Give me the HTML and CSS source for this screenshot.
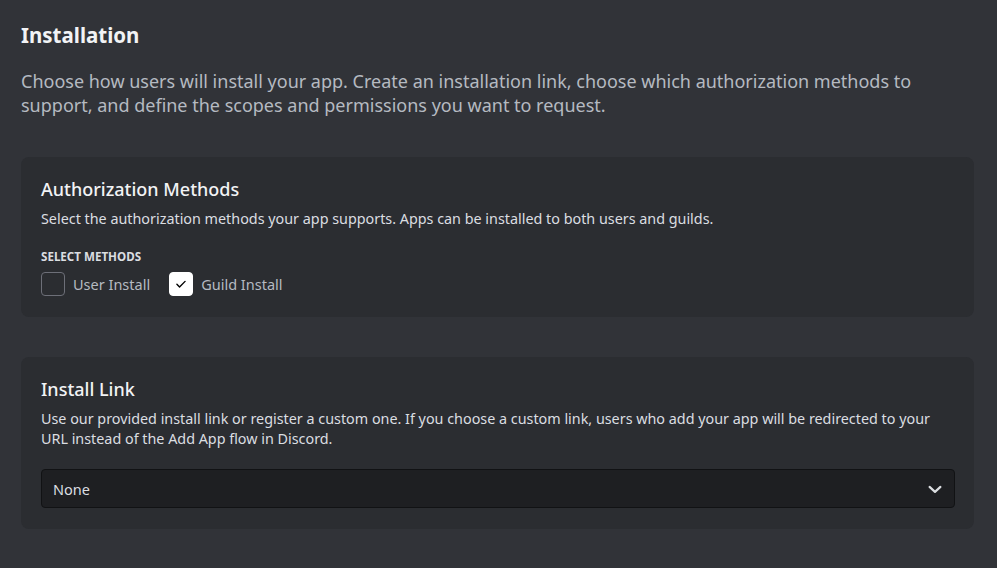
FILE: index.html
```html
<!DOCTYPE html>
<html>
<head>
<meta charset="utf-8">
<link rel="stylesheet" href="styles.css">
</head>
<body>
<main class="page">
  <h1 class="title">Installation</h1>
  <p class="lead">Choose how users will install your app. Create an installation link, choose which authorization methods to support, and define the scopes and permissions you want to request.</p>

  <section class="card">
    <h2 class="card-title">Authorization Methods</h2>
    <p class="card-desc">Select the authorization methods your app supports. Apps can be installed to both users and guilds.</p>
    <div class="label">SELECT METHODS</div>
    <div class="methods">
      <label class="check"><span class="box"></span><span class="check-text">User Install</span></label>
      <label class="check"><span class="box on"><svg width="14" height="14" viewBox="0 0 24 24"><path d="M5 12.5l4.5 4.5L19 7.5" fill="none" stroke="#000" stroke-width="2.4" stroke-linecap="round" stroke-linejoin="round"/></svg></span><span class="check-text">Guild Install</span></label>
    </div>
  </section>

  <section class="card">
    <h2 class="card-title">Install Link</h2>
    <p class="card-desc">Use our provided install link or register a custom one. If you choose a custom link, users who add your app will be redirected to your URL instead of the Add App flow in Discord.</p>
    <div class="select">
      <span class="select-value">None</span>
      <svg class="chevron" width="20" height="20" viewBox="0 0 24 24"><path d="M5.5 9.5l6.5 6 6.5-6" fill="none" stroke="#dbdee1" stroke-width="2.6" stroke-linecap="round" stroke-linejoin="round"/></svg>
    </div>
  </section>
</main>
</body>
</html>
```

FILE: styles.css
```css
* { box-sizing: border-box; }
html, body {
  margin: 0;
  background: #313338;
  height: 100%;
}
body {
  font-family: "Noto Sans", "Open Sans", sans-serif;
  color: #dbdee1;
}
.page {
  padding: 20px 23px 20px 21px;
}
.title {
  margin: 0;
  font-size: 20.5px;
  line-height: 30px;
  font-weight: 700;
  color: #f2f3f5;
}
.lead {
  margin: 19px 0 0;
  font-size: 18px;
  line-height: 24px;
  color: #b5bac1;
}
.card {
  background: #2b2d31;
  border-radius: 8px;
  padding: 20px 19px 21px 20px;
  margin-top: 40px;
}
.card-title {
  margin: 0;
  font-size: 18px;
  line-height: 24px;
  font-weight: 500;
  color: #f2f3f5;
}
.card-desc {
  margin: 8px 0 0;
  font-size: 14.35px;
  line-height: 20px;
  color: #dbdee1;
}
.label {
  margin-top: 20px;
  font-size: 11.6px;
  font-weight: 700;
  line-height: 16px;
  color: #dbdee1;
}
.methods {
  display: flex;
  gap: 19px;
  margin-top: 7px;
}
.check {
  display: flex;
  align-items: center;
  gap: 8px;
}
.box {
  width: 24px;
  height: 24px;
  border-radius: 4px;
  border: 1px solid #6d6f78;
  display: flex;
  align-items: center;
  justify-content: center;
}
.box.on {
  background: #ffffff;
  border-color: #ffffff;
}
.check-text {
  font-size: 14.5px;
  color: #b5bac1;
}
.select {
  margin-top: 20px;
  height: 39px;
  background: #1e1f22;
  border: 1px solid #111214;
  border-radius: 4px;
  display: flex;
  align-items: center;
  justify-content: space-between;
  padding: 0 9px 0 11px;
}
.select-value {
  font-size: 14.5px;
  color: #dbdee1;
}
.chevron { display: block; }
```
